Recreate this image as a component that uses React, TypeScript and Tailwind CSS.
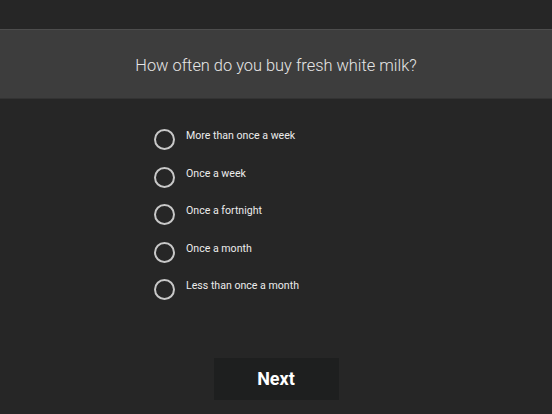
import React, { useState } from 'react';

const options = [
  'More than once a week',
  'Once a week',
  'Once a fortnight',
  'Once a month',
  'Less than once a month',
];

export default function App() {
  const [selected, setSelected] = useState<number | null>(null);

  return (
    <div
      className="flex flex-col h-[414px] w-full overflow-hidden bg-[#262626]"
      style={{ fontFamily: 'Roboto, "Noto Sans", sans-serif' }}
    >
      {/* Question header */}
      <header className="mt-[29px] h-[70px] shrink-0 flex items-center justify-center pt-[4px] bg-[#3d3d3d] border-t border-[#4d4d4d] border-b border-b-[#333333]">
        <h1 className="text-[16.4px] font-light text-[#e6e6e6]">
          How often do you buy fresh white milk?
        </h1>
      </header>

      {/* Options */}
      <div className="flex flex-col pl-[154px] pt-[30px]">
        {options.map((o, i) => (
          <button
            key={o}
            onClick={() => setSelected(i)}
            className="flex items-start gap-[11px] h-[37.5px] text-left"
          >
            <span className="w-[21px] h-[21px] shrink-0 rounded-full border-2 border-[#c8c8c8] flex items-center justify-center">
              {selected === i && <span className="w-[11px] h-[11px] rounded-full bg-[#c8c8c8]" />}
            </span>
            <span className="-mt-[1px] text-[10.6px] leading-[16px] text-[#ececec]">{o}</span>
          </button>
        ))}
      </div>

      {/* Next */}
      <div className="flex-1 flex items-end justify-center pb-[14px]">
        <button className="w-[125px] h-[42px] pb-[2px] bg-[#1e1f1f] text-white text-[18px] font-bold">
          Next
        </button>
      </div>
    </div>
  );
}
